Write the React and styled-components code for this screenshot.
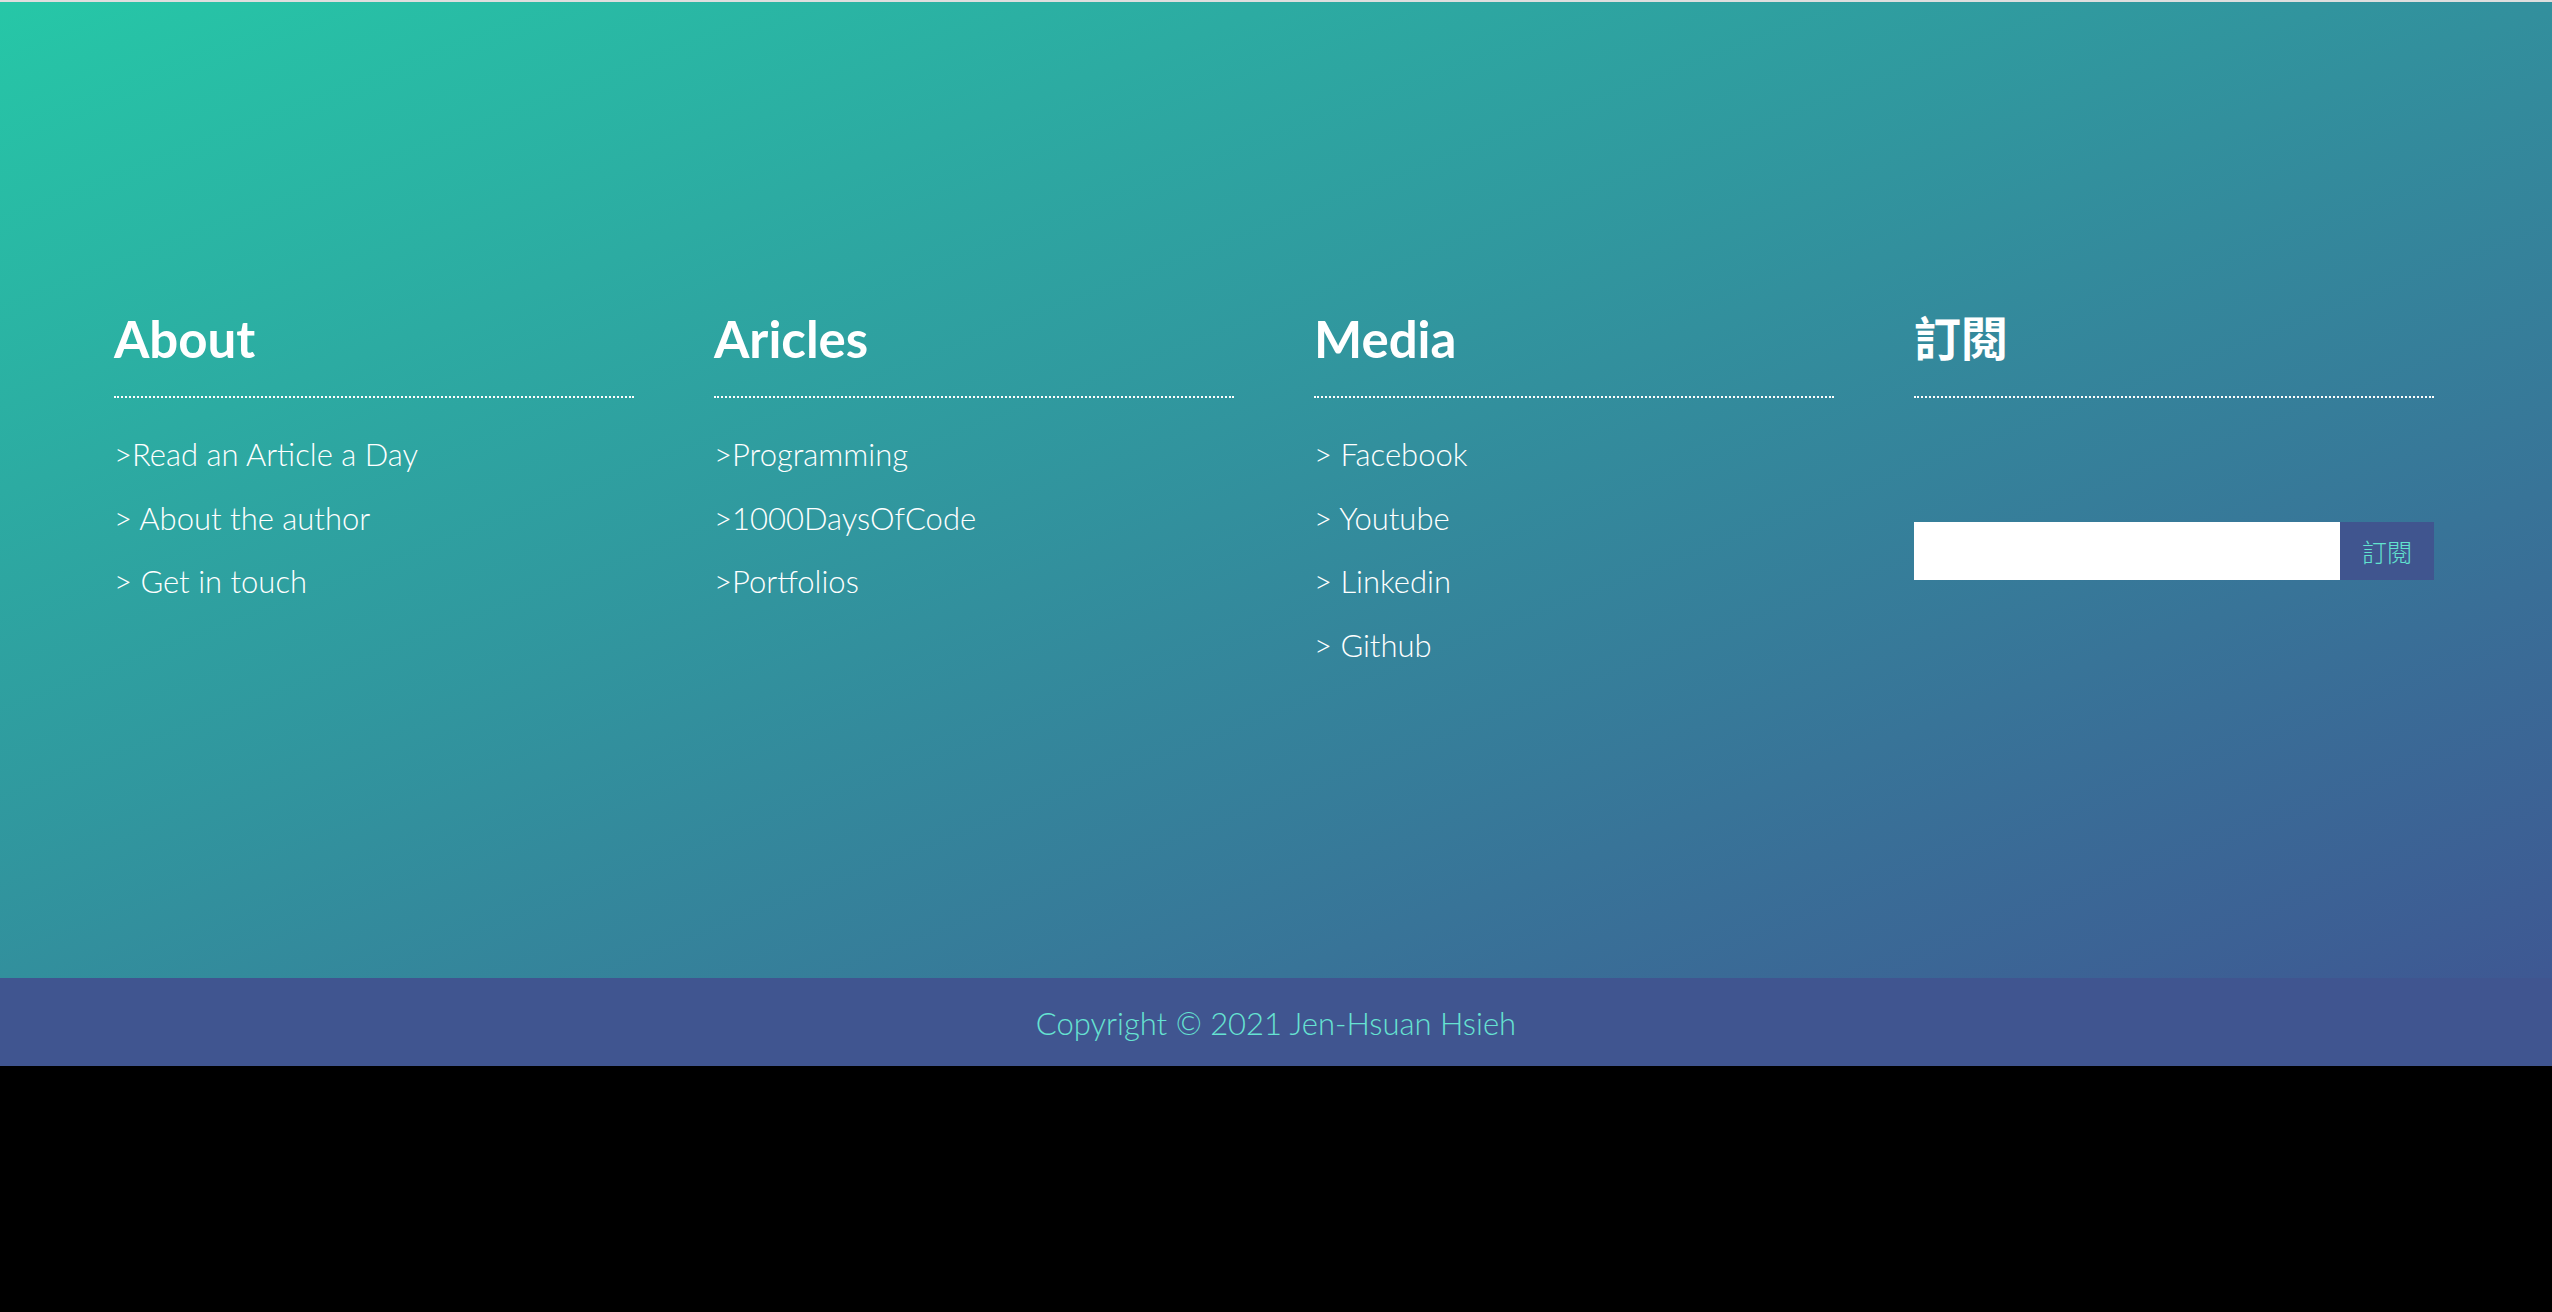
import React from "react";
import styled, { createGlobalStyle } from "styled-components";

const GlobalStyle = createGlobalStyle`
  html, body {
    margin: 0;
    padding: 0;
    background: #000;
  }
  body {
    font-family: "Lato", "Noto Sans CJK TC", sans-serif;
  }
  * { box-sizing: border-box; }
`;

const Footer = styled.footer`
  display: flex;
  flex-direction: column;
  border-top: 2px solid #dedede;
`;

const Main = styled.section`
  height: 976px;
  padding: 306px 118px 0 114px;
  background: linear-gradient(to bottom right, #26c7a7 0%, #3e5893 100%);
`;

const Columns = styled.div`
  display: grid;
  grid-template-columns: repeat(4, 520px);
  column-gap: 80px;
  align-items: start;
`;

const Column = styled.div`
  display: flex;
  flex-direction: column;
`;

const Heading = styled.h3`
  margin: 0;
  padding-bottom: 27px;
  border-bottom: 2px dotted #ffffff;
  color: #ffffff;
  font-family: "Lato", "Noto Sans CJK TC", sans-serif;
  font-weight: 700;
  font-size: ${(p) => (p.$cjk ? "47px" : "51px")};
  line-height: 61px;
  letter-spacing: 0;
`;

const LinkList = styled.ul`
  list-style: none;
  margin: 25px 0 0;
  padding: 0;
`;

const LinkItem = styled.li`
  font-family: "Lato", sans-serif;
  font-weight: 300;
  font-size: 31px;
  line-height: 63.5px;
  color: #ffffff;
  white-space: pre;
`;

const Subscribe = styled.form`
  display: flex;
  margin-top: 124px;
  height: 58px;
`;

const EmailInput = styled.input`
  flex: 1;
  min-width: 0;
  height: 100%;
  border: none;
  outline: none;
  background: #ffffff;
  padding: 0 12px;
  font-family: "Lato", sans-serif;
  font-size: 24px;
`;

const SubmitButton = styled.button`
  width: 94px;
  height: 100%;
  border: none;
  background: #40558f;
  color: #62e3cf;
  font-family: "Noto Sans CJK TC", sans-serif;
  font-weight: 300;
  font-size: 25px;
  padding: 0;
  cursor: pointer;
`;

const BottomBar = styled.div`
  height: 88px;
  background: #405590;
  display: flex;
  align-items: center;
  justify-content: center;
`;

const Copyright = styled.p`
  margin: 0;
  color: #66e3d2;
  font-family: "Lato", sans-serif;
  font-weight: 300;
  font-size: 31px;
  line-height: 1;
  padding-top: 2px;
`;

const columns = [
  {
    title: "About",
    links: [">Read an Article a Day", "> About the author", "> Get in touch"],
  },
  {
    title: "Aricles",
    links: [">Programming", ">1000DaysOfCode", ">Portfolios"],
  },
  {
    title: "Media",
    links: ["> Facebook", "> Youtube", "> Linkedin", "> Github"],
  },
];

export default function App() {
  return (
    <>
      <GlobalStyle />
      <Footer>
        <Main>
          <Columns>
            {columns.map((col) => (
              <Column key={col.title}>
                <Heading>{col.title}</Heading>
                <LinkList>
                  {col.links.map((l) => (
                    <LinkItem key={l}>{l}</LinkItem>
                  ))}
                </LinkList>
              </Column>
            ))}
            <Column>
              <Heading $cjk>訂閱</Heading>
              <Subscribe onSubmit={(e) => e.preventDefault()}>
                <EmailInput type="email" aria-label="email" />
                <SubmitButton type="submit">訂閱</SubmitButton>
              </Subscribe>
            </Column>
          </Columns>
        </Main>
        <BottomBar>
          <Copyright>Copyright © 2021 Jen-Hsuan Hsieh</Copyright>
        </BottomBar>
      </Footer>
    </>
  );
}
